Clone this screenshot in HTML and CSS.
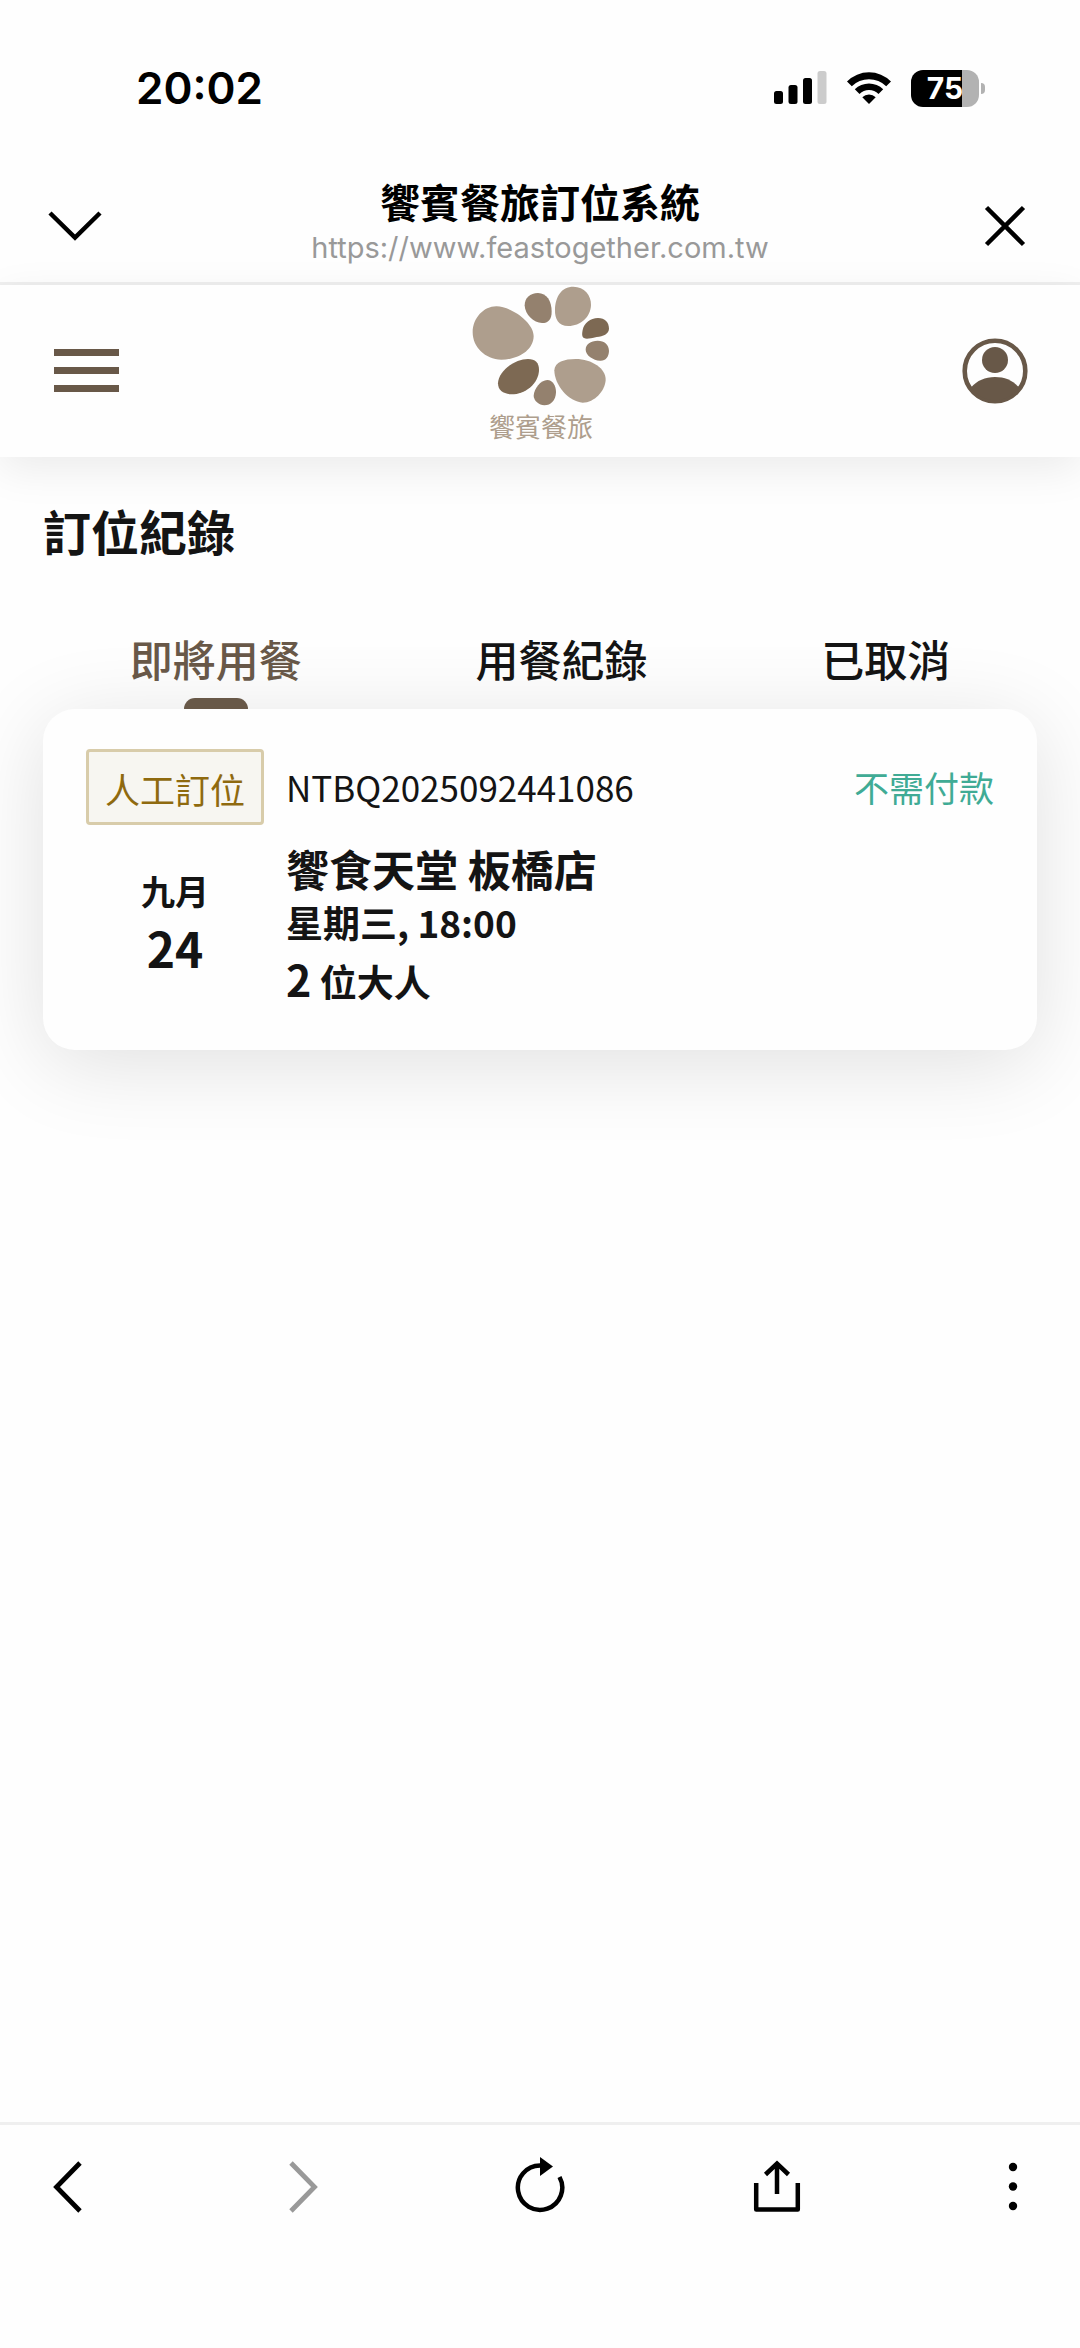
FILE: index.html
```html
<!DOCTYPE html>
<html lang="zh-Hant">
<head>
<meta charset="utf-8">
<meta name="viewport" content="width=device-width, initial-scale=1">
<title>饗賓餐旅訂位系統</title>
<link rel="stylesheet" href="styles.css">
</head>
<body>
<div class="status-bar">
  <span class="clock">20:02</span>
  <div class="status-icons">
    <svg width="53" height="34" viewBox="0 0 53 34" aria-hidden="true">
      <rect x="0" y="20" width="9" height="13" rx="2.5"/>
      <rect x="14.5" y="14" width="9" height="19" rx="2.5"/>
      <rect x="29" y="7" width="9" height="26" rx="2.5"/>
      <rect x="43.5" y="0" width="9" height="33" rx="2.5" fill="#ccc"/>
    </svg>
    <svg width="46" height="34" viewBox="0 0 46 34" aria-hidden="true">
      <path d="M1 10.500a31 31 0 0 1 44 0l-4.800 4.700a24.500 24.500 0 0 0-34.400 0z"/>
      <path d="M8.800 18.300a20 20 0 0 1 28.400 0l-4.700 4.700a13.500 13.500 0 0 0-19 0z"/>
      <path d="M16.300 26.300a9.500 9.500 0 0 1 13.400 0L23 33z"/>
    </svg>
    <div class="battery"><span class="battery-level">75</span></div>
  </div>
</div>

<div class="browser-bar">
  <button class="icon-button" type="button" aria-label="收合">
    <svg width="56" height="32" viewBox="0 0 56 32" fill="none" stroke="#000" stroke-width="4.500"><path d="M3 3 28 27.500 53 3"/></svg>
  </button>
  <div class="page-info">
    <div class="page-title">饗賓餐旅訂位系統</div>
    <div class="page-url">https://www.feastogether.com.tw</div>
  </div>
  <button class="icon-button" type="button" aria-label="關閉">
    <svg width="42" height="42" viewBox="0 0 42 42" fill="none" stroke="#000" stroke-width="4.500"><path d="M2.500 2.500 39.500 39.500M39.500 2.500 2.500 39.500"/></svg>
  </button>
</div>

<header class="site-header">
  <button class="icon-button menu-button" type="button" aria-label="選單">
    <svg width="66" height="44" viewBox="0 0 66 44" fill="#685848"><path d="M0 0h65v7H0zM0 18h65v7H0zM0 36h65v7H0z"/></svg>
  </button>
  <a class="logo" href="#">
    <svg width="142" height="122" viewBox="90 45 426 366" aria-hidden="true">
      <g fill="#ae9e8d">
        <path d="M170 109C214 110 282 157 281 199C280 243 232 269 184 269C135 268 98 231 98 187C98 143 133 108 170 109Z"/>
        <path d="M400 50C433 50 454 76 453 105C452 141 422 168 385 168C355 167 344 146 345 119C346 80 364 50 400 50Z"/>
        <path d="M407 267C456 267 498 296 497 330C495 363 463 398 428 398C386 396 343 345 343 301C344 276 373 267 407 267Z"/>
      </g>
      <g fill="#94816e">
        <path d="M294 69C320 70 335 92 335 125C335 148 325 159 306 159C281 158 255 135 254 106C254 84 270 69 294 69Z"/>
        <path d="M473 212C493 212 507 224 507 243C506 262 497 273 480 272C460 271 437 256 437 239C437 223 452 212 473 212Z"/>
        <path d="M322 330C338 331 348 346 348 367C347 392 333 406 313 406C297 405 281 392 281 377C282 356 302 330 322 330Z"/>
      </g>
      <g fill="#7d6953">
        <path d="M474 144C495 144 507 157 507 176C506 193 490 198 470 201C450 205 440 208 432 204C425 200 426 190 428 180C432 159 451 144 474 144Z"/>
        <path d="M264 267C286 267 297 279 297 299C297 340 256 373 214 373C190 372 174 361 174 340C175 302 225 267 264 267Z"/>
      </g>
    </svg>
    <span class="logo-name">饗賓餐旅</span>
  </a>
  <button class="icon-button account-button" type="button" aria-label="會員">
    <svg width="66" height="66" viewBox="0 0 66 66">
      <circle cx="33" cy="33" r="30.300" fill="none" stroke="#685848" stroke-width="4.600"/>
      <circle cx="33" cy="22" r="13" fill="#685848"/>
      <path d="M9 49.500C15 42.500 23 39 33 39s18 3.500 24 10.500A29.100 29.100 0 0 1 9 49.500z" fill="#685848"/>
    </svg>
  </button>
</header>

<main class="content">
  <h1 class="heading">訂位紀錄</h1>
  <div class="tabs" role="tablist">
    <button class="tab tab-active" type="button" role="tab" aria-selected="true">即將用餐</button>
    <button class="tab" type="button" role="tab" aria-selected="false">用餐紀錄</button>
    <button class="tab" type="button" role="tab" aria-selected="false">已取消</button>
  </div>
  <article class="card">
    <span class="badge">人工訂位</span>
    <span class="booking-id">NTBQ2025092441086</span>
    <span class="payment">不需付款</span>
    <div class="date">
      <div class="month">九月</div>
      <div class="day">24</div>
    </div>
    <div class="details">
      <h2 class="restaurant">饗食天堂 板橋店</h2>
      <div class="time">星期三, 18:00</div>
      <div class="guests"><span class="guest-count">2</span> 位大人</div>
    </div>
  </article>
</main>

<nav class="toolbar">
  <button class="icon-button" type="button" aria-label="上一頁">
    <svg width="32" height="54" viewBox="0 0 32 54" fill="none" stroke="#000" stroke-width="4.800"><path d="M29 3 5.500 27 29 51"/></svg>
  </button>
  <button class="icon-button" type="button" aria-label="下一頁" disabled>
    <svg width="32" height="54" viewBox="0 0 32 54" fill="none" stroke="#999" stroke-width="4.800"><path d="M3 3l23.500 24L3 51"/></svg>
  </button>
  <button class="icon-button" type="button" aria-label="重新整理">
    <svg width="52" height="60" viewBox="0 0 52 60" fill="none" stroke="#000" stroke-width="4.500"><path d="M26 8.500A22.200 22.200 0 1 0 45.500 20"/><path d="M26 0 39 9.500 26 19z" fill="#000" stroke="none"/></svg>
  </button>
  <button class="icon-button" type="button" aria-label="分享">
    <svg width="48" height="54" viewBox="0 0 48 54" fill="none" stroke="#000" stroke-width="4.500"><path d="M3.200 23V49.500H44.800V23" stroke-linejoin="round"/><path d="M24 34V4M12.500 14.500 24 3.500 35.500 14.500"/></svg>
  </button>
  <button class="icon-button" type="button" aria-label="更多">
    <svg width="10" height="50" viewBox="0 0 10 50"><circle cx="5" cy="5" r="4.200"/><circle cx="5" cy="24.500" r="4.200"/><circle cx="5" cy="44" r="4.200"/></svg>
  </button>
</nav>
</body>
</html>
```
FILE: styles.css
```css
* {
  box-sizing: border-box;
}

body {
  display: flex;
  flex-direction: column;
  min-height: 100vh;
  margin: 0;
  background: #fefefe;
  color: #141414;
  font-family: "Noto Sans CJK TC", sans-serif;
}

h1,
h2 {
  margin: 0;
}

button {
  padding: 0;
  border: 0;
  background: none;
  color: inherit;
  font: inherit;
}

svg {
  display: block;
}

.status-bar {
  display: flex;
  justify-content: space-between;
  align-items: center;
  padding: 60px 95px 54px 136px;
}

.clock {
  color: #000;
  font: 600 44px/56px Inter, sans-serif;
}

.status-icons {
  display: flex;
  align-items: center;
  gap: 19px;
}

.battery {
  display: flex;
  align-items: center;
  gap: 2px;
}

.battery-level {
  width: 68px;
  border-radius: 12px;
  background: linear-gradient(to right, #000 75%, #b2b2b2 75%);
  color: #fff;
  font: 700 30px/37px Inter, sans-serif;
  text-align: center;
}

.battery::after {
  content: "";
  width: 4px;
  height: 11px;
  border-radius: 0 6px 6px 0;
  background: #b2b2b2;
}

.icon-button {
  display: flex;
  justify-content: center;
  align-items: center;
  width: 60px;
  height: 60px;
}

.browser-bar {
  display: flex;
  justify-content: space-between;
  align-items: center;
  padding: 3px 45px 3px;
  border-bottom: 3px solid #efefef;
}

.page-info {
  padding-bottom: 12px;
  text-align: center;
}

.page-title {
  color: #000;
  font-size: 40px;
  font-weight: 700;
  line-height: 56px;
}

.page-url {
  color: #999;
  font: 400 29px/38px Inter, sans-serif;
}

.site-header {
  display: flex;
  justify-content: space-between;
  align-items: center;
  padding: 0 52px 0 54px;
  box-shadow: 0 12px 40px rgba(0, 0, 0, 0.08);
}

.menu-button,
.account-button {
  width: 66px;
  height: 66px;
}

.logo {
  display: flex;
  flex-direction: column;
  align-items: center;
  padding-bottom: 12px;
  color: #ae9e8d;
  text-decoration: none;
}

.logo-name {
  font-size: 26px;
  line-height: 38px;
}

.content {
  flex: 1;
  padding: 40px 43px;
}

.heading {
  font-size: 48px;
  line-height: 66px;
}

.tabs {
  display: flex;
  justify-content: space-around;
  padding-top: 62px;
}

.tab {
  display: flex;
  flex-direction: column;
  align-items: center;
  gap: 7px;
  font-size: 43px;
  font-weight: 500;
  line-height: 66px;
}

.tab::after {
  content: "";
  width: 64px;
  height: 11px;
  border-radius: 11px 11px 0 0;
}

.tab-active {
  color: #685848;
}

.tab-active::after {
  background: #685848;
}

.card {
  display: grid;
  grid-template-columns: auto 1fr auto;
  column-gap: 22px;
  align-items: center;
  padding: 40px 43px;
  border-radius: 32px;
  background: #fefefe;
  box-shadow: 0 14px 86px rgba(0, 0, 0, 0.12);
}

.badge {
  padding: 4px 16px 0;
  border: 3px solid #d8ccaa;
  border-radius: 4px;
  background: #f7f6f1;
  color: #8f6a0f;
  font-size: 35px;
  line-height: 66px;
}

.booking-id,
.payment {
  font-size: 35px;
  line-height: 76px;
}

.payment {
  color: #40ab95;
}

.date {
  padding-top: 11px;
  text-align: center;
}

.month {
  font-size: 34px;
  font-weight: 700;
  line-height: 48px;
}

.day {
  font-size: 48px;
  font-weight: 700;
  line-height: 64px;
}

.details {
  grid-column: 2 / -1;
  padding-top: 16px;
}

.restaurant {
  font-size: 43px;
  line-height: 54px;
}

.time,
.guests {
  font-size: 37px;
  font-weight: 700;
  line-height: 54px;
}

.guests {
  line-height: 58px;
}

.guest-count {
  font-size: 43px;
}

.toolbar {
  display: flex;
  justify-content: space-between;
  padding: 32px 37px 131px;
  border-top: 3px solid #efefef;
}
```
